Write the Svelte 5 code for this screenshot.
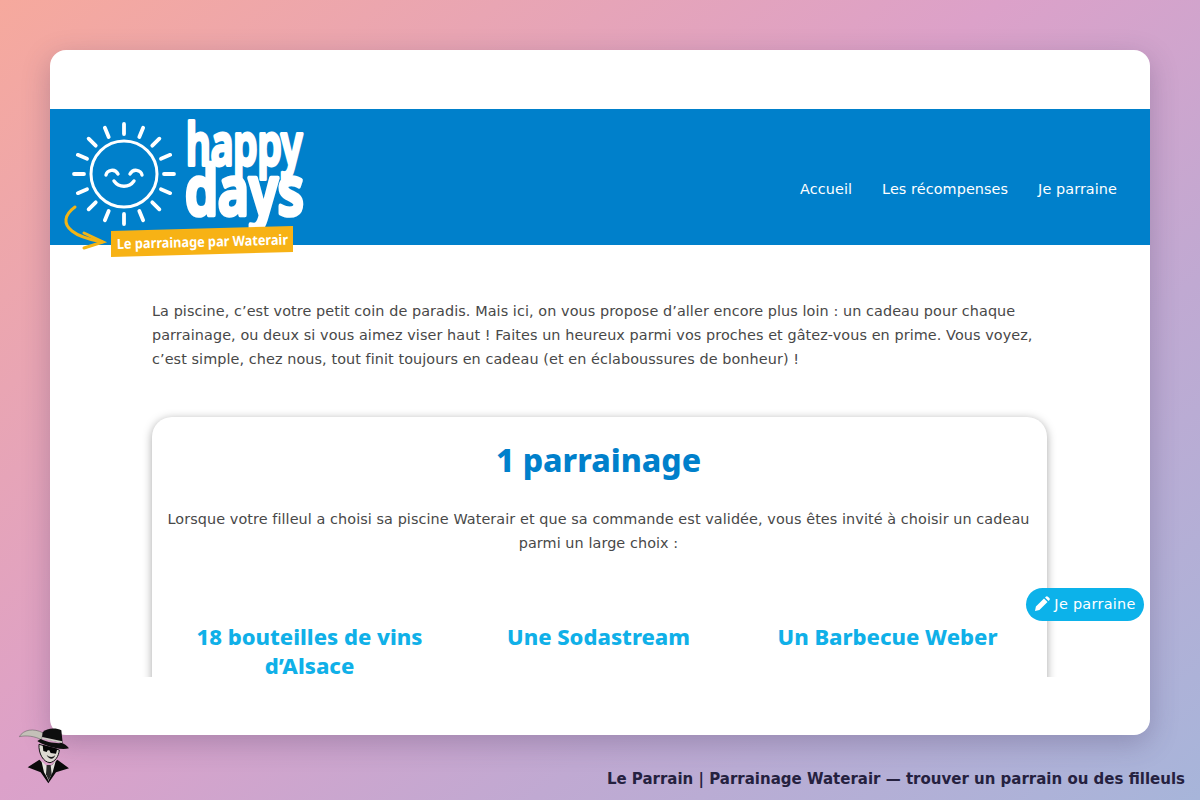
<script>
  const rays = Array.from({ length: 16 }, (_, i) => i * 22.5);
</script>

<style>
:global(body){margin:0}
.page{position:relative;width:1200px;height:800px;overflow:hidden;background:linear-gradient(142deg,#f6a99d 0%,#dca1c9 45%,#c0a9d2 70%,#a7b5da 100%);font-family:"DejaVu Sans",sans-serif}
.window{position:absolute;left:50px;top:50px;width:1100px;height:685px;box-sizing:border-box;padding:59px 0 58px;background:#fff;border-radius:16px;box-shadow:0 8px 28px rgba(60,50,90,.28)}
.view{height:100%;overflow:hidden}
.hero{height:136px;background:#0080cb;display:flex;align-items:center;padding:24px 33px 0 14px;box-sizing:border-box;position:relative}
.logo{position:absolute;left:10px;top:10px;width:250px;height:142px;overflow:visible}
.nav{display:flex;gap:30px;margin-left:auto;color:#fff;font-size:14.4px;letter-spacing:.08px}
.intro{margin:54px 102px 0;color:#484848;font-size:14.4px;line-height:24px;letter-spacing:.08px}
.card{margin:46px 103px 0 102px;background:#fff;border-radius:20px;box-shadow:0 2px 10px rgba(0,0,0,.35);padding:18px 16px 20px 14px;text-align:center}
h1{margin:0;color:#0080cb;font:800 32px/50px "Noto Sans",sans-serif}
.lead{margin:22px 0 0;color:#484848;font-size:14.4px;line-height:24px;letter-spacing:.08px}
.cols{display:grid;grid-template-columns:repeat(3,1fr);gap:24px;margin:67px 11px 0}
h2{margin:0;color:#10b0e8;font:800 22px/29px "Noto Sans",sans-serif}
.cta{position:absolute;left:1026px;top:588px;height:33px;width:118px;box-sizing:border-box;padding-bottom:2px;border-radius:17px;background:#0cb2ea;color:#fff;font-size:14.4px;letter-spacing:.3px;display:flex;align-items:center;justify-content:center;gap:4px}
.mascot{position:absolute;left:0;top:715px;width:90px;height:85px}
.caption{position:absolute;right:15px;top:769px;color:#25213f;font:700 15px/20px "DejaVu Sans",sans-serif}
.happy{font:600 60px "Noto Sans",sans-serif;fill:#fff;stroke:#fff;stroke-width:4;stroke-linejoin:round}
.tag{font:700 14px "Noto Sans",sans-serif;fill:#fff}
</style>

<div class="page">
  <div class="window"><div class="view">
    <header class="hero">
      <svg class="logo" viewBox="0 0 250 142">
        <g fill="none" stroke="#fff" stroke-width="3.800" stroke-linecap="round">
          <circle cx="64" cy="55" r="33" stroke-width="3"/>
          {#each rays as a}
            <path d="M64 15v-10" transform="rotate({a} 64 55)"/>
          {/each}
          <path d="M46 56c1-5 9-7 12-1M70 55c3-6 11-4 12 1M54 62c5 7 15 7 20 0" stroke-width="3.400"/>
          <path d="M15 88c-11 8-12 17-3 24 6 5 15 8 30 11" stroke="#f2b415" stroke-width="3"/>
          <path d="M24 114l19 9-19 6" stroke="#f2b415" stroke-width="3"/>
        </g>
        <text class="happy" transform="translate(126 46) scale(.645 .95)">happy</text>
        <text class="happy" transform="translate(125 96) scale(.88 1.150)">days</text>
        <polygon points="51,112 233,107 233,133 51,138" fill="#f7b215"/>
        <text class="tag" transform="translate(57 130) rotate(-1.500) scale(.91 1)">Le parrainage par Waterair</text>
      </svg>
      <nav class="nav"><span>Accueil</span><span>Les récompenses</span><span>Je parraine</span></nav>
    </header>
    <p class="intro">La piscine, c’est votre petit coin de paradis. Mais ici, on vous propose d’aller encore plus loin : un cadeau pour chaque parrainage, ou deux si vous aimez viser haut ! Faites un heureux parmi vos proches et gâtez-vous en prime. Vous voyez, c’est simple, chez nous, tout finit toujours en cadeau (et en éclaboussures de bonheur) !</p>
    <section class="card">
      <h1>1 parrainage</h1>
      <p class="lead">Lorsque votre filleul a choisi sa piscine Waterair et que sa commande est validée, vous êtes invité à choisir un cadeau parmi un large choix :</p>
      <div class="cols">
        <h2>18 bouteilles de vins d’Alsace</h2>
        <h2>Une Sodastream</h2>
        <h2>Un Barbecue Weber</h2>
      </div>
    </section>
  </div></div>
  <div class="cta">
    <svg width="16" height="16" viewBox="0 0 16 16"><path fill="#fff" d="M1 15l.9-4.400L10 2.500l3.500 3.500-8.100 8.100zM11 1.500l.8-.8a1.500 1.500 0 0 1 2.100 0l1.400 1.400a1.500 1.500 0 0 1 0 2.100l-.8.8z"/></svg>
    Je parraine
  </div>
  <svg class="mascot" viewBox="0 0 270 255">
    <path d="M58 65C70 44 100 38 130 54L124 74C105 64 80 60 58 65Z" fill="#c4c0b8" stroke="#555" stroke-width="1.500"/>
    <path d="M83 157L118 134 135 150 145 200 155 150 172 134 207 160 168 172 145 205 122 172Z" fill="#0a0a0a"/>
    <path d="M124 137L137 150 146 158 158 148 168 135 158 172 146 196 132 172Z" fill="#e4e2dd"/>
    <path d="M140 150L152 150 155 178 146 195 138 178Z" fill="#2a2a2a"/>
    <path d="M117 88L178 105C176 125 165 140 150 143 130 142 115 115 117 88Z" fill="#dedad2" stroke="#111" stroke-width="3"/>
    <path d="M128 52C140 38 170 38 184 46L188 84 126 70Z" fill="#0e0e0e"/>
    <path d="M127 66L187 79 186 84 125 71Z" fill="#cfccc6"/>
    <path d="M112 78C125 88 175 108 207 100 200 90 192 86 186 84 165 86 135 80 122 72Z" fill="#0e0e0e"/>
    <path d="M128 90L172 101 168 116 152 114 148 106 143 106 140 111 130 108Z" fill="#050505"/>
    <path d="M140 120C148 128 160 128 166 120 162 134 148 136 140 120Z" fill="#1a1a1a"/>
  </svg>
  <div class="caption">Le Parrain | Parrainage Waterair — trouver un parrain ou des filleuls</div>
</div>
